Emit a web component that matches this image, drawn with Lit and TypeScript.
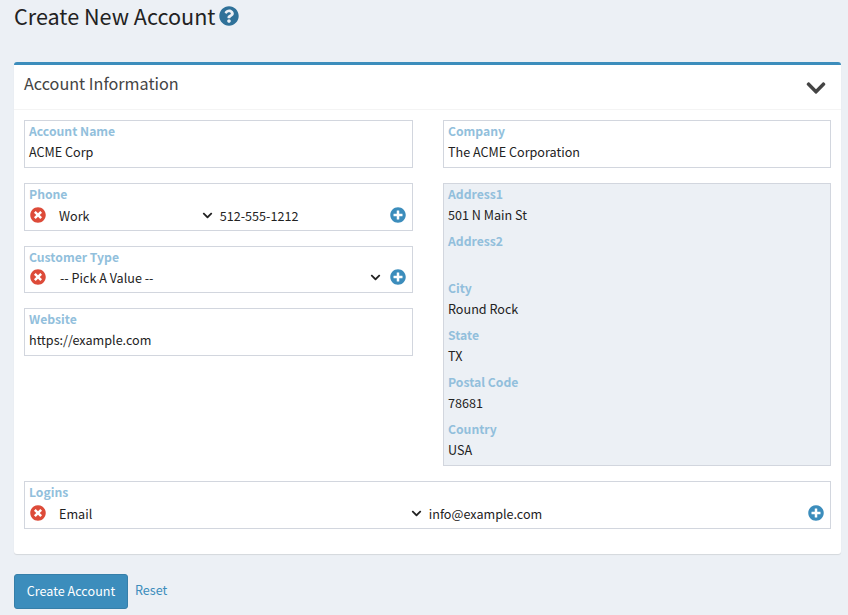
import { LitElement, html, css, svg } from "lit";
import { customElement } from "lit/decorators.js";

const QUESTION = "M504 256c0 136.997-111.043 248-248 248S8 392.997 8 256C8 119.083 119.043 8 256 8s248 111.083 248 248zM262.655 90c-54.497 0-89.255 22.957-116.549 63.758-3.536 5.286-2.353 12.415 2.715 16.258l34.699 26.31c5.205 3.947 12.621 3.008 16.665-2.122 17.864-22.658 30.113-35.797 57.303-35.797 20.429 0 45.698 13.148 45.698 32.958 0 14.976-12.363 22.667-32.534 33.976C247.128 238.528 216 254.941 216 296v4c0 6.627 5.373 12 12 12h56c6.627 0 12-5.373 12-12v-1.333c0-28.462 83.186-29.647 83.186-106.667 0-58.002-60.165-102-116.531-102zM256 338c-25.365 0-46 20.635-46 46 0 25.364 20.635 46 46 46s46-20.636 46-46c0-25.365-20.635-46-46-46z";
const TIMES = "M256 8C119 8 8 119 8 256s111 248 248 248 248-111 248-248S393 8 256 8zm121.6 313.1c4.7 4.7 4.7 12.3 0 17L338 377.6c-4.7 4.7-12.3 4.7-17 0L256 312l-65.1 65.6c-4.7 4.7-12.3 4.7-17 0L134.4 338c-4.7-4.7-4.7-12.3 0-17l65.6-65-65.6-65.1c-4.7-4.7-4.7-12.3 0-17l39.6-39.6c4.7-4.7 12.3-4.7 17 0l65 65.7 65.1-65.6c4.7-4.7 12.3-4.7 17 0l39.6 39.6c4.7 4.7 4.7 12.3 0 17L312 256l65.6 65.1z";
const PLUS = "M256 8C119 8 8 119 8 256s111 248 248 248 248-111 248-248S393 8 256 8zm144 276c0 6.6-5.4 12-12 12h-92v92c0 6.6-5.4 12-12 12h-56c-6.6 0-12-5.4-12-12v-92h-92c-6.6 0-12-5.4-12-12v-56c0-6.6 5.4-12 12-12h92v-92c0-6.6 5.4-12 12-12h56c6.6 0 12 5.4 12 12v92h92c6.6 0 12 5.4 12 12v56z";
const CHEVRON = "M207.029 381.476L12.686 187.132c-9.373-9.373-9.373-24.569 0-33.941l22.667-22.667c9.357-9.357 24.522-9.375 33.901-.04L224 284.505l154.745-154.021c9.379-9.335 24.544-9.317 33.901.04l22.667 22.667c9.373 9.373 9.373 24.569 0 33.941L240.971 381.476c-9.373 9.372-24.569 9.372-33.942 0z";

const icon = (d: string, cls: string, w = 512) =>
  html`<svg class=${cls} viewBox="0 0 ${w} 512">${svg`<path fill="currentColor" d=${d}></path>`}</svg>`;

@customElement("app-root")
export class AppRoot extends LitElement {
  static override styles = css`
    :host {
      display: block;
      min-height: 100vh;
      box-sizing: border-box;
      background: #ecf0f5;
      padding: 0 7px 6px 14px;
      font-family: "Noto Sans CJK SC", "Noto Sans", sans-serif;
      font-size: 12.6px;
      color: #222;
    }

    h1 {
      display: flex;
      align-items: flex-start;
      gap: 4px;
      margin: 0;
      height: 62px;
      box-sizing: border-box;
      font-size: 21.6px;
      font-weight: 400;
      line-height: 32px;
    }

    .help {
      width: 20px;
      height: 20px;
      margin-top: 6px;
      color: #2f7199;
    }

    .card {
      background: #fff;
      border-top: 3px solid #3c8dbc;
      border-radius: 3px;
      box-shadow: 0 1px 1px rgba(0, 0, 0, 0.1);
    }

    .card-header {
      display: flex;
      align-items: center;
      justify-content: space-between;
      height: 44px;
      padding: 0 15px 0 10px;
      border-bottom: 1px solid #f4f4f4;
      font-size: 16.2px;
      color: #444;
    }

    .card-title {
      padding-bottom: 8px;
    }

    .toggle {
      width: 20px;
      height: 22px;
      margin-top: 2px;
      color: #444;
    }

    .card-body {
      display: flex;
      flex-direction: column;
      gap: 15px;
      padding: 10px 10px 25px;
    }

    .columns {
      display: grid;
      grid-template-columns: 389px 388px;
      gap: 30px;
    }

    .column {
      display: flex;
      flex-direction: column;
      gap: 15px;
    }

    .field {
      border: 1px solid #d2d6de;
      padding: 0 4px;
      height: 48px;
      box-sizing: border-box;
    }

    .field.short {
      height: 47px;
    }

    .field.short .row {
      margin-top: -1px;
    }

    .group {
      border: 1px solid #d2d6de;
      background: #ecf0f5;
      padding: 0 4px;
      height: 283px;
      box-sizing: border-box;
    }

    .group-row {
      height: 47px;
    }

    label {
      display: block;
      height: 22px;
      line-height: 21px;
      font-size: 12.2px;
      font-weight: 700;
      color: #92bfdc;
    }

    .value {
      display: block;
      height: 24px;
      line-height: 17px;
    }

    .row {
      display: flex;
      align-items: center;
      height: 18px;
    }

    .remove {
      width: 16px;
      height: 16px;
      margin: 0 1px;
      color: #dd4b39;
      flex: none;
    }

    .add {
      width: 16px;
      height: 16px;
      margin: 0 2.5px 0 6px;
      color: #3c8dbc;
      flex: none;
    }

    .pair {
      flex: 1;
      display: grid;
      grid-template-columns: 1fr 1fr;
      align-items: center;
    }

    .pair.solo {
      grid-template-columns: 1fr;
    }

    .select {
      display: flex;
      align-items: center;
      justify-content: space-between;
      padding: 0 2px 0 12px;
    }

    .solo .select {
      padding: 0 3px 0 13px;
    }

    .chevron {
      width: 11px;
      height: 11px;
      color: #222;
    }

    .input {
      padding-left: 4.5px;
    }

    .actions {
      display: flex;
      align-items: center;
      gap: 7px;
      margin-top: 20px;
    }

    button {
      width: 114px;
      height: 35px;
      padding: 0 0 2px;
      background: #3c8dbc;
      border: 1px solid #367fa9;
      border-radius: 3px;
      color: #fff;
      font: inherit;
    }

    a {
      color: #3c8dbc;
      text-decoration: none;
      margin-top: -4px;
    }
  `;

  private field(name: string, value: string, short = false) {
    return html`<div class="field ${short ? "short" : ""}">
      <label>${name}</label><span class="value">${value}</span>
    </div>`;
  }

  private multi(name: string, option: string, value?: string, short = false) {
    return html`<div class="field ${short ? "short" : ""}">
      <label>${name}</label>
      <div class="row">
        ${icon(TIMES, "remove")}
        <div class="pair ${value === undefined ? "solo" : ""}">
          <div class="select"><span>${option}</span>${icon(CHEVRON, "chevron", 448)}</div>
          ${value !== undefined ? html`<div class="input">${value}</div>` : ""}
        </div>
        ${icon(PLUS, "add")}
      </div>
    </div>`;
  }

  override render() {
    const address = [
      ["Address1", "501 N Main St"],
      ["Address2", ""],
      ["City", "Round Rock"],
      ["State", "TX"],
      ["Postal Code", "78681"],
      ["Country", "USA"],
    ];

    return html`
      <h1>Create New Account ${icon(QUESTION, "help")}</h1>
      <div class="card">
        <div class="card-header">
          <span class="card-title">Account Information</span>
          ${icon(CHEVRON, "toggle", 448)}
        </div>
        <div class="card-body">
          <div class="columns">
            <div class="column">
              ${this.field("Account Name", "ACME Corp")}
              ${this.multi("Phone", "Work", "512-555-1212")}
              ${this.multi("Customer Type", "-- Pick A Value --", undefined, true)}
              ${this.field("Website", "https://example.com")}
            </div>
            <div class="column">
              ${this.field("Company", "The ACME Corporation")}
              <div class="group">
                ${address.map(
                  ([name, value]) => html`<div class="group-row">
                    <label>${name}</label><span class="value">${value}</span>
                  </div>`,
                )}
              </div>
            </div>
          </div>
          ${this.multi("Logins", "Email", "info@example.com")}
        </div>
      </div>
      <div class="actions">
        <button>Create Account</button>
        <a href="#">Reset</a>
      </div>
    `;
  }
}
